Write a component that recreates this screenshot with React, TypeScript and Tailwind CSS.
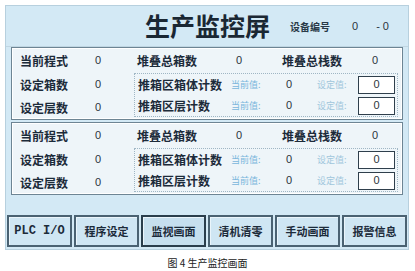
const cjk = "font-['Noto_Sans_CJK_SC',sans-serif]";

function Num({ v, w }: { v: string; w: string }) {
  return <div className={`${w} text-[11px] text-[#2b3440] font-['Liberation_Sans',sans-serif]`}>{v}</div>;
}

function Panel() {
  return (
    <div className="mx-[5px] h-[73px] border border-[#6d8594] bg-[#eef5f9] shadow-[inset_0_0_0_1px_#ffffff] flex flex-col">
      <div className="h-[26px] flex items-center pl-[8px]">
        <div className="w-[75px] text-[12px] font-bold text-[#1c2b3a]">当前程式</div>
        <Num v="0" w="w-[42px]" />
        <div className="w-[99px] text-[12px] font-bold text-[#1c2b3a]">堆叠总箱数</div>
        <Num v="0" w="w-[46px]" />
        <div className="w-[90px] text-[12px] font-bold text-[#1c2b3a]">堆叠总栈数</div>
        <Num v="0" w="w-[20px]" />
      </div>
      <div className="flex pl-[8px]">
        <div className="w-[114px] flex flex-col">
          {["设定箱数", "设定层数"].map((t) => (
            <div key={t} className="h-[23px] flex items-center">
              <div className="w-[75px] text-[12px] font-bold text-[#1c2b3a]">{t}</div>
              <Num v="0" w="w-[30px]" />
            </div>
          ))}
        </div>
        <div className="w-[264px] h-[44px] border border-dotted border-[#9fb6c4] flex flex-col justify-around">
          {["推箱区箱体计数", "推箱区层计数"].map((t) => (
            <div key={t} className="h-[20px] flex items-center pl-[3px]">
              <div className="w-[93px] text-[12px] font-bold text-[#1c2b3a]">{t}</div>
              <div className="w-[55px] text-[9px] text-[#79b6dc]">当前值:</div>
              <Num v="0" w="w-[31px]" />
              <div className="w-[41px] text-[9px] text-[#a0c6dc]">设定值:</div>
              <div className="w-[37px] h-[18px] bg-white border border-[#2f3f4c] flex items-center justify-center text-[11px] text-[#2b3440] font-['Liberation_Sans',sans-serif]">
                0
              </div>
            </div>
          ))}
        </div>
      </div>
    </div>
  );
}

export default function App() {
  const buttons = ["PLC I/O", "程序设定", "监视画面", "清机清零", "手动画面", "报警信息"];
  return (
    <div className={`w-[415px] h-[271px] bg-white pt-[5px] ${cjk}`}>
      <div className="mx-[5px] w-[404px] h-[245px] bg-[#d3e9f5] border border-[#b7d0de] flex flex-col">
        <div className="h-[41px] flex items-center pl-[139px] border-b border-[#c0d6e2]">
          <div className="text-[25px] font-bold text-[#1a2733]">生产监控屏</div>
          <div className="ml-[20px] text-[10px] font-bold text-[#2a3a48]">设备编号</div>
          <div className="ml-[22px] text-[11px] text-[#2b3440] font-['Liberation_Sans',sans-serif]">0</div>
          <div className="ml-[18px] text-[11px] text-[#2b3440] font-['Liberation_Sans',sans-serif]">- 0</div>
        </div>
        <Panel />
        <div className="h-[2px]" />
        <Panel />
        <div className="flex-1 flex items-end gap-[2px] px-[1px] pb-[2px]">
          {buttons.map((b) => (
            <div
              key={b}
              className={`flex-1 h-[32px] flex items-center justify-center text-[11px] font-bold text-[#1c2b3a] border-2 shadow-[inset_1px_1px_0_#eaf5fb] ${
                b === "监视画面" ? "border-[#2a3e4c] bg-[#c6dfee]" : "border-[#4a6272] bg-[#cfe6f3]"
              } ${b === "PLC I/O" ? "font-['Liberation_Mono',monospace] text-[12px]" : ""}`}
            >
              {b}
            </div>
          ))}
        </div>
      </div>
      <div className="mt-[5px] text-center text-[10px] text-[#222]">图 4 生产监控画面</div>
    </div>
  );
}
